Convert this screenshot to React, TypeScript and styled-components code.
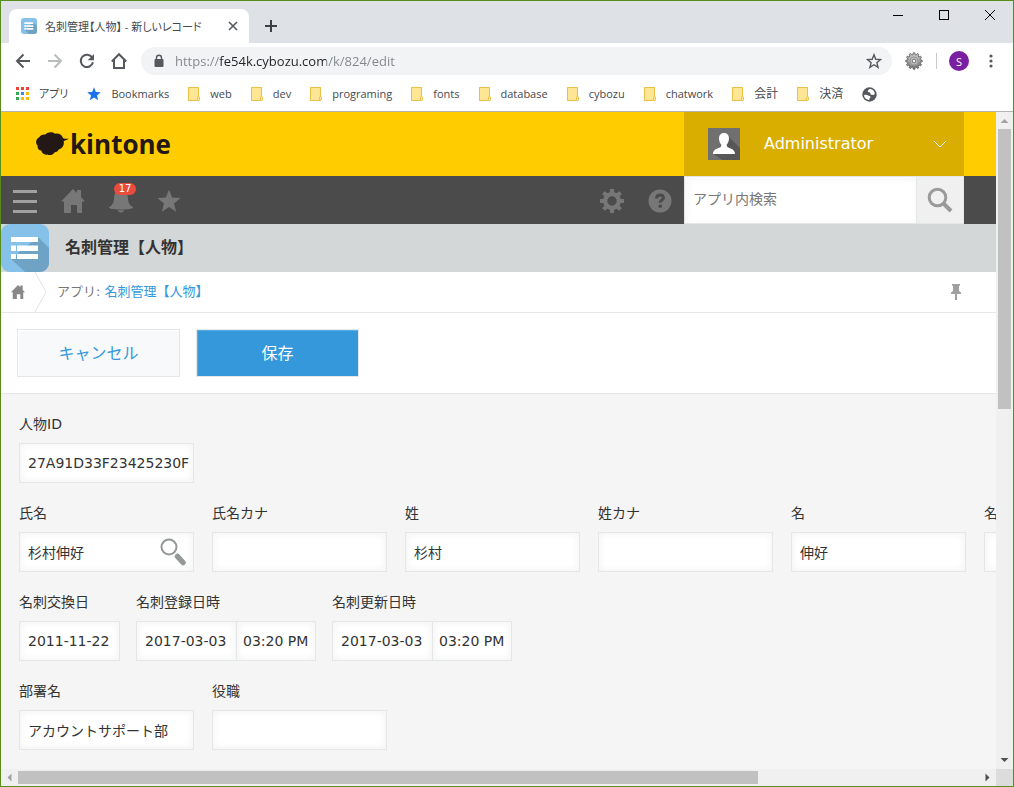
import React, { useId } from "react";
import styled, { createGlobalStyle } from "styled-components";

const uiFont = `"Open Sans", "Noto Sans CJK JP", sans-serif`;
const pageFont = `"DejaVu Sans", "Noto Sans CJK JP", sans-serif`;

const GlobalStyle = createGlobalStyle`
  *, *::before, *::after { box-sizing: border-box; }
  body { margin: 0; overflow: hidden; }
  button, input { font: inherit; margin: 0; border-radius: 0; outline: none; }
  button { padding: 0; border: 0; background: none; cursor: pointer; }
  svg { display: block; flex: none; }
  a { text-decoration: none; }
`;

/* ---------- browser window ---------- */

const Window = styled.div`
  display: flex;
  flex-direction: column;
  height: 100vh;
  border: 1px solid #588d1c;
  background: #fff;
  font-family: ${uiFont};
`;

const TabStrip = styled.div`
  display: flex;
  align-items: flex-end;
  height: 42px;
  flex: none;
  padding-left: 8px;
  background: #dee1e6;
`;

const Tab = styled.div`
  display: flex;
  align-items: center;
  width: 240px;
  height: 34px;
  padding: 0 8px 0 12px;
  gap: 8px;
  border-radius: 8px 8px 0 0;
  background: #fff;
  color: #45494d;
  font-size: 11px;
`;

const TabTitle = styled.span`
  flex: 1;
  overflow: hidden;
  white-space: nowrap;
  font-feature-settings: "palt";
`;

const IconButton = styled.button<{ $w: number; $h: number }>`
  display: flex;
  align-items: center;
  justify-content: center;
  flex: none;
  width: ${(p) => p.$w}px;
  height: ${(p) => p.$h}px;
`;

const NavButton = styled.button`
  display: flex;
  align-items: center;
  justify-content: center;
  flex: none;
  width: 48px;
  height: 48px;
  padding-top: 2px;
`;

const WindowControls = styled.div`
  display: flex;
  align-self: flex-start;
  margin-left: auto;
`;

const Toolbar = styled.div`
  display: flex;
  align-items: center;
  flex: none;
  height: 36px;
  padding: 0 12px 0 6px;
`;

const Omnibox = styled.label`
  display: flex;
  align-items: center;
  flex: 1;
  height: 28px;
  margin-left: 6px;
  padding: 0 10px 0 12px;
  gap: 10px;
  border-radius: 14px;
  background: #f1f3f4;
`;

const UrlInput = styled.input`
  flex: 1;
  min-width: 0;
  height: 28px;
  padding: 0;
  border: 0;
  font-size: 13px;
  color: #202124;
  background: linear-gradient(90deg, #80868b 44px, #202124 44px, #202124 151px, #80868b 151px);
  background-clip: text;
  -webkit-background-clip: text;
  -webkit-text-fill-color: transparent;
`;

const ToolbarDivider = styled.span`
  width: 1px;
  height: 16px;
  background: #c8cacd;
`;

const ProfileBadge = styled.span`
  display: flex;
  align-items: center;
  justify-content: center;
  width: 20px;
  height: 20px;
  border-radius: 50%;
  background: #7b1fa2;
  color: #fff;
  font-size: 11px;
`;

const BookmarksBar = styled.nav`
  display: flex;
  align-items: center;
  flex: none;
  height: 33px;
  padding: 0 0 2px 15px;
  gap: 19px;
  border-bottom: 1px solid #b4b4b4;
`;

const Bookmark = styled.a`
  display: flex;
  align-items: center;
  gap: 10px;
  color: #45494d;
  font-size: 11px;
  line-height: 18px;
  white-space: nowrap;
`;

const KanaBookmark = styled(Bookmark)`
  font-feature-settings: "palt";
`;

const KanjiBookmark = styled(Bookmark)`
  font-size: 12px;
`;

/* ---------- viewport and scroll bars ---------- */

const Viewport = styled.div`
  display: grid;
  grid-template-columns: minmax(0, 1fr) 17px;
  grid-template-rows: minmax(0, 1fr) 17px;
  flex: 1;
  min-height: 0;
`;

const VScroll = styled.div`
  display: flex;
  flex-direction: column;
  align-items: center;
  background: #f0f0f0;
`;

const HScroll = styled.div`
  display: flex;
  align-items: center;
  background: #f0f0f0;
`;

const VTrack = styled.div`
  flex: 1;
  width: 13px;
`;

const VThumb = styled.div`
  height: 45%;
  background: #c1c1c1;
`;

const HTrack = styled.div`
  flex: 1;
  height: 13px;
`;

const HThumb = styled.div`
  width: 77%;
  height: 100%;
  background: #c1c1c1;
`;

const ScrollCorner = styled.div`
  background: #dcdcdc;
`;

/* ---------- kintone page ---------- */

const Page = styled.div`
  display: flex;
  flex-direction: column;
  min-width: 0;
  overflow: hidden;
  font-family: ${pageFont};
  color: #333;
`;

const Header = styled.header`
  display: flex;
  flex: none;
  height: 64px;
  padding: 0 32px 0 35px;
  background: #ffcc00;
`;

const Logo = styled.a`
  display: flex;
  align-items: center;
  gap: 1px;
  color: #231815;
  font-family: "Open Sans", sans-serif;
  font-size: 26px;
  font-weight: 700;
  line-height: 32px;
`;

const UserMenu = styled.button`
  display: flex;
  align-items: center;
  width: 280px;
  margin-left: auto;
  padding: 0 17px 0 24px;
  gap: 24px;
  background: #d9ae00;
  color: #fff;
  font-size: 16px;
  text-align: left;
`;

const UserName = styled.span`
  flex: 1;
  padding-bottom: 2px;
`;

const NavBar = styled.nav`
  display: flex;
  flex: none;
  height: 48px;
  padding-right: 32px;
  background: #4b4b4b;
`;

const NavSpacer = styled.span`
  flex: 1;
`;

const BadgeHolder = styled.span`
  position: relative;
`;

const CountBadge = styled.span`
  position: absolute;
  top: -5px;
  left: 5px;
  width: 22px;
  height: 12px;
  border-radius: 6px;
  background: #e74c3c;
  color: #fff;
  font-size: 10px;
  line-height: 12px;
  text-align: center;
`;

const SearchForm = styled.form`
  display: flex;
  width: 280px;
`;

const SearchInput = styled.input`
  flex: 1;
  min-width: 0;
  padding: 0 8px 2px;
  border: 1px solid #e3e7e8;
  background: #fff;
  box-shadow: inset 2px 2px 8px #f5f5f5;
  font-size: 14px;
  &::placeholder { color: #777; opacity: 1; }
`;

const SearchButton = styled.button`
  display: flex;
  align-items: center;
  justify-content: center;
  width: 47px;
  border: 1px solid #e3e7e8;
  border-left: 0;
  background: #f0f0f0;
`;

const AppTitleBar = styled.div`
  display: flex;
  align-items: center;
  flex: none;
  height: 48px;
  gap: 16px;
  background: #d4d7d7;
`;

const AppTitle = styled.h1`
  margin: 0;
  font-size: 16px;
  font-weight: 700;
  line-height: 24px;
`;

const Breadcrumb = styled.div`
  display: flex;
  align-items: center;
  flex: none;
  height: 41px;
  padding-right: 35px;
  border-bottom: 1px solid #e3e7e8;
  color: #777;
  font-size: 13px;
`;

const CrumbHome = styled.a`
  display: flex;
  align-items: center;
  width: 56px;
  padding-left: 10px;
  gap: 9px;
`;

const CrumbText = styled.span`
  flex: 1;
  padding-bottom: 4px;
`;

const CrumbLink = styled.a`
  color: #3498db;
`;

const ActionBar = styled.div`
  display: flex;
  flex: none;
  height: 81px;
  padding: 16px;
  gap: 16px;
  border-bottom: 1px solid #e3e7e8;
`;

const ActionButton = styled.button<{ $primary?: boolean }>`
  width: 163px;
  height: 48px;
  padding-bottom: 2px;
  border: 1px solid #e3e7e8;
  background: ${(p) => (p.$primary ? "#3498db" : "#f7f9fa")};
  color: ${(p) => (p.$primary ? "#fff" : "#3498db")};
  box-shadow: ${(p) => (p.$primary ? "inset 1px 1px 0 #5bade2" : "inset 1px 1px 0 #fff")};
  font-size: 16px;
`;

const RecordForm = styled.form`
  display: flex;
  flex-direction: column;
  flex: 1;
  padding: 18px;
  gap: 18px;
  background: #f5f5f5;
`;

const FieldRow = styled.div<{ $gap?: number }>`
  display: flex;
  gap: ${(p) => p.$gap ?? 18}px;
`;

const FieldBox = styled.div`
  display: flex;
  flex-direction: column;
  flex: none;
  gap: 7px;
`;

const FieldLabel = styled.label`
  height: 24px;
  font-size: 14px;
  line-height: 24px;
  white-space: nowrap;
`;

const Controls = styled.div`
  display: flex;
  position: relative;
`;

const TextInput = styled.input<{ $w: number }>`
  width: ${(p) => p.$w}px;
  height: 40px;
  padding: 0 2px 1px 8px;
  border: 1px solid #e3e7e8;
  background: #fff;
  box-shadow: inset 0 0 6px 2px #f5f5f5;
  color: #333;
  font-size: 14px;
`;

const TimeInput = styled(TextInput)`
  padding-left: 6px;
  border-left: 0;
`;

const LookupButton = styled.button`
  position: absolute;
  top: 6px;
  right: 7px;
`;

/* ---------- drawings ---------- */

const AppIcon = ({ size }: { size: number }) => (
  <svg width={size} height={size} viewBox="0 0 48 48">
    <rect width="48" height="48" rx="9" fill="#85c1e9" />
    <path d="M37 13 48 24V39a9 9 0 0 1-9 9H24L10 35Z" fill="#6ea3c6" />
    <path d="M10 13h27v5H10zM10 21.500h5v5.500h-5zM16 21.500h21v5.500H16zM10 30h5v5h-5zM16 30h21v5H16z" fill="#fff" />
  </svg>
);

const Arrow = ({ left, color }: { left?: boolean; color: string }) => (
  <svg width="16" height="16" viewBox="0 0 16 16" fill="none" stroke={color} strokeWidth="2">
    {left ? <path d="M15 8H2.500M8.500 1.500 2 8l6.500 6.500" /> : <path d="M1 8h12.500M7.500 1.500 14 8l-6.500 6.500" />}
  </svg>
);

const Reload = () => (
  <svg width="16" height="16" viewBox="0 0 16 16">
    <path d="M13.200 4.500A6.200 6.200 0 1 0 14 9.300" fill="none" stroke="#55595e" strokeWidth="2" />
    <path d="M15 1v6.300H8.700Z" fill="#55595e" />
  </svg>
);

const OutlineHome = () => (
  <svg width="18" height="18" viewBox="0 0 18 18" fill="none" stroke="#55595e" strokeWidth="2">
    <path d="M1.800 9.500 9 2.200l7.200 7.300M4 8v8h10V8" />
  </svg>
);

const Lock = () => (
  <svg width="12" height="14" viewBox="0 0 12 14">
    <rect x="1.500" y="5" width="9" height="8" rx="1" fill="#55595e" />
    <path d="M3.500 6V3.700a2.500 2.500 0 0 1 5 0V6" fill="none" stroke="#55595e" strokeWidth="1.400" />
  </svg>
);

const starPath = "M12 0.500l3.100 8 8.500.5-6.600 5.400 2.200 8.300L12 18l-7.200 4.700L7 14.400.400 9l8.500-.5z";

const Star = ({ size, fill, stroke }: { size: number; fill: string; stroke?: string }) => (
  <svg width={size} height={size} viewBox={stroke ? "-1.500 -2.500 27 28" : "0 0 24 24"}>
    <path d={starPath} fill={fill} stroke={stroke} strokeWidth={stroke ? 2.4 : 0} />
  </svg>
);

const cog = (teeth: number, outer: number, inner: number, c: number) => {
  const step = (Math.PI * 2) / teeth;
  const pt = (r: number, a: number) => `${(c + r * Math.sin(a)).toFixed(2)} ${(c - r * Math.cos(a)).toFixed(2)}`;
  let d = "";
  for (let i = 0; i < teeth; i++) {
    const a = i * step;
    d += `${i ? "L" : "M"}${pt(inner, a - step * 0.3)}L${pt(outer, a - step * 0.2)}L${pt(outer, a + step * 0.2)}L${pt(inner, a + step * 0.3)}`;
  }
  return d + "Z";
};

const ExtensionCog = () => (
  <svg width="18" height="18" viewBox="0 0 18 18">
    <defs>
      <linearGradient id="metal" x1="0" y1="0" x2="0" y2="1">
        <stop offset="0" stopColor="#d0d0d0" />
        <stop offset="1" stopColor="#777" />
      </linearGradient>
    </defs>
    <path d={cog(12, 8.2, 6.4, 9)} fill="url(#metal)" stroke="#555" strokeWidth="0.800" />
    <circle cx="9" cy="9" r="4" fill="#bdbdbd" stroke="#9a9a9a" />
    <circle cx="9" cy="9" r="1.800" fill="#f4f4f4" stroke="#777" />
  </svg>
);

const AppsGrid = () => {
  const colors = ["#ea4335", "#ea4335", "#ea4335", "#34a853", "#4285f4", "#fbbc05", "#34a853", "#fbbc05", "#fbbc05"];
  return (
    <svg width="13" height="14" viewBox="0 0 13 14">
      {colors.map((c, i) => (
        <rect key={i} x={(i % 3) * 5} y={Math.floor(i / 3) * 5} width="3" height="3" fill={c} />
      ))}
    </svg>
  );
};

const Folder = () => (
  <svg width="12" height="14" viewBox="0 0 12 14">
    <rect x="0.500" y="0.500" width="10" height="13" fill="#ffe694" stroke="#e8c14a" />
    <rect x="9.500" y="9.500" width="2" height="4" rx="1" fill="#ffe694" stroke="#e8c14a" />
  </svg>
);

const Globe = () => (
  <svg width="15" height="15" viewBox="0 0 15 15">
    <circle cx="7.500" cy="7.500" r="7.200" fill="#55595e" />
    <path d="M2 8.200c1.500-.6 3.200-.5 4.200.3.800.7 2 .3 2.300 1.300.2.900-1 1.300-1 2.200 0 .5-.4.900-.9.900C4 12.500 2 10.500 2 8.200zM7 2.200c-.4 1-1.500 1.200-1.300 2.400.3 1.200 1.600.4 2.300 1.200.7.900.3 1.800 1.500 2 1.200.200 2.300.2 3.300-.6C12.800 4 10 1.600 7 2.200z" fill="#fff" />
  </svg>
);

const Cloud = () => (
  <svg width="33" height="24" viewBox="0 0 33 24" fill="#231815">
    <path d="M9.500 2.600C11.500-.2 16.500-.5 18.800 1.700c3.200-1 6.900.5 7.900 3.700.5 1.100 1.800 1.500 6 1.400-1.300 1.200-3.400 1.500-5 2.500.8 4.200-1.200 7.200-4.900 8.200-.8 1.700-2.400 2.800-4.200 2.700-1.200 2.600-4.600 3.600-7.300 2.300-2.800.7-5.300-.8-5.800-3.700C2.800 18.400 1 16.300 1.700 13.700-.8 11.600-.4 7 3 5.500 4.300 3.200 7 2 9.500 2.600Z" />
  </svg>
);

const Avatar = () => (
  <svg width="32" height="32" viewBox="0 0 32 32">
    <rect width="32" height="32" fill="#707070" />
    <path d="M20 8 32 20v12H14L6 26Z" fill="#575757" />
    <path d="M16 5c3.500 0 5 2.500 5 5.500 0 2.600-1 4.700-2.300 6 0 1.600.3 2.300 1.600 2.900 3 1.200 6.700 2.200 6.700 6.600H5c0-4.400 3.700-5.400 6.700-6.600 1.300-.6 1.600-1.300 1.600-2.900C12 15.200 11 13.100 11 10.500 11 7.500 12.500 5 16 5Z" fill="#fff" />
  </svg>
);

const SolidHome = ({ size, color }: { size: number; color: string }) => (
  <svg width={size} height={size} viewBox="0 0 24 24" fill={color}>
    <path d="M12 0 16 4V1h4v7l4 4.500h-3V24h-5v-8h-6v8H3V12.500H0Z" />
  </svg>
);

const Bell = () => (
  <svg width="24" height="26" viewBox="0 0 24 26" fill="#777">
    <path d="M12 1c5 0 6.500 4 6.800 8 .3 6 2 8.500 5.200 10v1c-4 2-20 2-24 0v-1c3.200-1.500 4.900-4 5.200-10C5.500 5 7 1 12 1ZM9 22.200h6c0 1.400-1.500 2.200-3 2.200s-3-.8-3-2.200Z" />
  </svg>
);

const Gear = () => (
  <svg width="26" height="26" viewBox="0 0 26 26">
    <path fillRule="evenodd" d={`${cog(8, 12.2, 9, 13)}M8.300 13a4.700 4.700 0 1 0 9.400 0 4.700 4.700 0 1 0-9.400 0Z`} fill="#777" />
  </svg>
);

const Help = () => (
  <svg width="24" height="24" viewBox="0 0 24 24">
    <circle cx="12" cy="12" r="11.500" fill="#777" />
    <path d="M8.600 9.500c0-4.700 7.200-4.200 6.900-.7-.2 2.400-3.300 2.200-3.300 5" fill="none" stroke="#4b4b4b" strokeWidth="3" />
    <rect x="10.700" y="15.700" width="3.200" height="3" fill="#4b4b4b" />
  </svg>
);

const Magnifier = () => (
  <svg width="26" height="26" viewBox="0 0 26 26" fill="none" stroke="#9a9a9a">
    <circle cx="10.500" cy="10.500" r="8.300" strokeWidth="3" />
    <path d="M16.500 16.500 24 24" strokeWidth="4" />
  </svg>
);

const LookupGlass = () => (
  <svg width="28" height="28" viewBox="0 0 28 28" fill="none" stroke="#949897">
    <circle cx="10" cy="9" r="7.500" strokeWidth="2" />
    <path d="M18.500 18.500 24 24.500" strokeWidth="5.500" strokeLinecap="round" />
  </svg>
);

const Pin = () => (
  <svg width="10" height="16" viewBox="0 0 10 16" fill="#a0a0a0">
    <path d="M1 0h8v1.800H8V7l2 1.500V10H6v6H4v-6H0V8.500L2 7V1.800H1Z" />
  </svg>
);

const ScrollArrow = ({ d, color }: { d: string; color: string }) => (
  <svg width="17" height="17" viewBox="0 0 17 17">
    <path d={d} fill={color} />
  </svg>
);

/* ---------- composition ---------- */

type FieldProps = { label: string; value?: string; time?: string; width?: number; lookup?: boolean };

const Field = ({ label, value = "", time, width = 175, lookup }: FieldProps) => {
  const id = useId();
  return (
    <FieldBox>
      <FieldLabel htmlFor={id}>{label}</FieldLabel>
      <Controls>
        <TextInput id={id} type="text" $w={width} defaultValue={value} />
        {time && <TimeInput type="text" $w={79} defaultValue={time} aria-label={label} />}
        {lookup && (
          <LookupButton type="button" aria-label={label}>
            <LookupGlass />
          </LookupButton>
        )}
      </Controls>
    </FieldBox>
  );
};

const folders = ["web", "dev", "programing", "fonts", "database", "cybozu", "chatwork"];
const kanjiFolders = ["会計", "決済"];

export default function App() {
  return (
    <>
      <GlobalStyle />
      <Window>
        <TabStrip>
          <Tab>
            <AppIcon size={16} />
            <TabTitle>名刺管理【人物】 - 新しいレコード</TabTitle>
            <IconButton $w={16} $h={16}>
              <svg width="10" height="10" viewBox="0 0 10 10" stroke="#55595e" strokeWidth="1.600">
                <path d="m1 1 8 8M9 1 1 9" />
              </svg>
            </IconButton>
          </Tab>
          <IconButton $w={44} $h={34}>
            <svg width="12" height="12" viewBox="0 0 12 12" stroke="#3c4043" strokeWidth="2">
              <path d="M6 0v12M0 6h12" />
            </svg>
          </IconButton>
          <WindowControls>
            <IconButton $w={46} $h={28}>
              <svg width="10" height="10" viewBox="0 0 10 10"><path d="M0 5h10v1H0z" /></svg>
            </IconButton>
            <IconButton $w={46} $h={28}>
              <svg width="10" height="10" viewBox="0 0 10 10" fill="none" stroke="#000">
                <rect x="0.500" y="0.500" width="9" height="9" />
              </svg>
            </IconButton>
            <IconButton $w={46} $h={28}>
              <svg width="10" height="10" viewBox="0 0 10 10" stroke="#000"><path d="m0 0 10 10M10 0 0 10" /></svg>
            </IconButton>
          </WindowControls>
        </TabStrip>

        <Toolbar>
          <IconButton $w={32} $h={28}><Arrow left color="#55595e" /></IconButton>
          <IconButton $w={32} $h={28}><Arrow color="#babcbe" /></IconButton>
          <IconButton $w={32} $h={28}><Reload /></IconButton>
          <IconButton $w={32} $h={28}><OutlineHome /></IconButton>
          <Omnibox>
            <Lock />
            <UrlInput type="text" defaultValue="https://fe54k.cybozu.com/k/824/edit" />
            <Star size={16} fill="none" stroke="#55595e" />
          </Omnibox>
          <IconButton $w={44} $h={28}><ExtensionCog /></IconButton>
          <ToolbarDivider />
          <IconButton $w={44} $h={28}><ProfileBadge>S</ProfileBadge></IconButton>
          <IconButton $w={20} $h={28}>
            <svg width="4" height="14" viewBox="0 0 4 14" fill="#55595e">
              <circle cx="2" cy="2" r="1.600" /><circle cx="2" cy="7" r="1.600" /><circle cx="2" cy="12" r="1.600" />
            </svg>
          </IconButton>
        </Toolbar>

        <BookmarksBar>
          <KanaBookmark href="#"><AppsGrid />アプリ</KanaBookmark>
          <Bookmark href="#"><Star size={14} fill="#1a73e8" />Bookmarks</Bookmark>
          {folders.map((name) => (
            <Bookmark href="#" key={name}><Folder />{name}</Bookmark>
          ))}
          {kanjiFolders.map((name) => (
            <KanjiBookmark href="#" key={name}><Folder />{name}</KanjiBookmark>
          ))}
          <Bookmark href="#" aria-label="web"><Globe /></Bookmark>
        </BookmarksBar>

        <Viewport>
          <Page>
            <Header>
              <Logo href="#"><Cloud />kintone</Logo>
              <UserMenu>
                <Avatar />
                <UserName>Administrator</UserName>
                <svg width="14" height="8" viewBox="0 0 14 8" fill="none" stroke="#fff"><path d="m1 1 6 6 6-6" /></svg>
              </UserMenu>
            </Header>

            <NavBar>
              <NavButton>
                <svg width="24" height="23" viewBox="0 0 24 23" fill="#a0a0a0">
                  <path d="M0 0h24v3H0zM0 10h24v3H0zM0 20h24v3H0z" />
                </svg>
              </NavButton>
              <NavButton><SolidHome size={24} color="#777" /></NavButton>
              <NavButton>
                <BadgeHolder><Bell /><CountBadge>17</CountBadge></BadgeHolder>
              </NavButton>
              <NavButton><Star size={24} fill="#777" /></NavButton>
              <NavSpacer />
              <NavButton><Gear /></NavButton>
              <NavButton><Help /></NavButton>
              <SearchForm>
                <SearchInput type="text" placeholder="アプリ内検索" aria-label="アプリ内検索" />
                <SearchButton type="button" aria-label="アプリ内検索"><Magnifier /></SearchButton>
              </SearchForm>
            </NavBar>

            <AppTitleBar>
              <AppIcon size={48} />
              <AppTitle>名刺管理【人物】</AppTitle>
            </AppTitleBar>

            <Breadcrumb>
              <CrumbHome href="#" aria-label="kintone">
                <SolidHome size={14} color="#888" />
                <svg width="14" height="40" viewBox="0 0 14 40" fill="none" stroke="#e0e3e4"><path d="m1 0 11 20L1 40" /></svg>
              </CrumbHome>
              <CrumbText>アプリ: <CrumbLink href="#">名刺管理【人物】</CrumbLink></CrumbText>
              <Pin />
            </Breadcrumb>

            <ActionBar>
              <ActionButton type="button">キャンセル</ActionButton>
              <ActionButton type="button" $primary>保存</ActionButton>
            </ActionBar>

            <RecordForm>
              <FieldRow>
                <Field label="人物ID" value="27A91D33F23425230F" />
              </FieldRow>
              <FieldRow>
                <Field label="氏名" value="杉村伸好" lookup />
                <Field label="氏名カナ" />
                <Field label="姓" value="杉村" />
                <Field label="姓カナ" />
                <Field label="名" value="伸好" />
                <Field label="名カナ" />
              </FieldRow>
              <FieldRow $gap={16}>
                <Field label="名刺交換日" value="2011-11-22" width={101} />
                <Field label="名刺登録日時" value="2017-03-03" time="03:20 PM" width={101} />
                <Field label="名刺更新日時" value="2017-03-03" time="03:20 PM" width={101} />
              </FieldRow>
              <FieldRow>
                <Field label="部署名" value="アカウントサポート部" />
                <Field label="役職" />
              </FieldRow>
            </RecordForm>
          </Page>

          <VScroll>
            <ScrollArrow d="M4.500 11 8.500 7l4 4Z" color="#a3a3a3" />
            <VTrack><VThumb /></VTrack>
            <ScrollArrow d="M4.500 6 8.500 10l4-4Z" color="#505050" />
          </VScroll>
          <HScroll>
            <ScrollArrow d="M10.500 4.500 6.500 8.500l4 4Z" color="#a3a3a3" />
            <HTrack><HThumb /></HTrack>
            <ScrollArrow d="M6.500 4.500 10.500 8.500l-4 4Z" color="#505050" />
          </HScroll>
          <ScrollCorner />
        </Viewport>
      </Window>
    </>
  );
}
